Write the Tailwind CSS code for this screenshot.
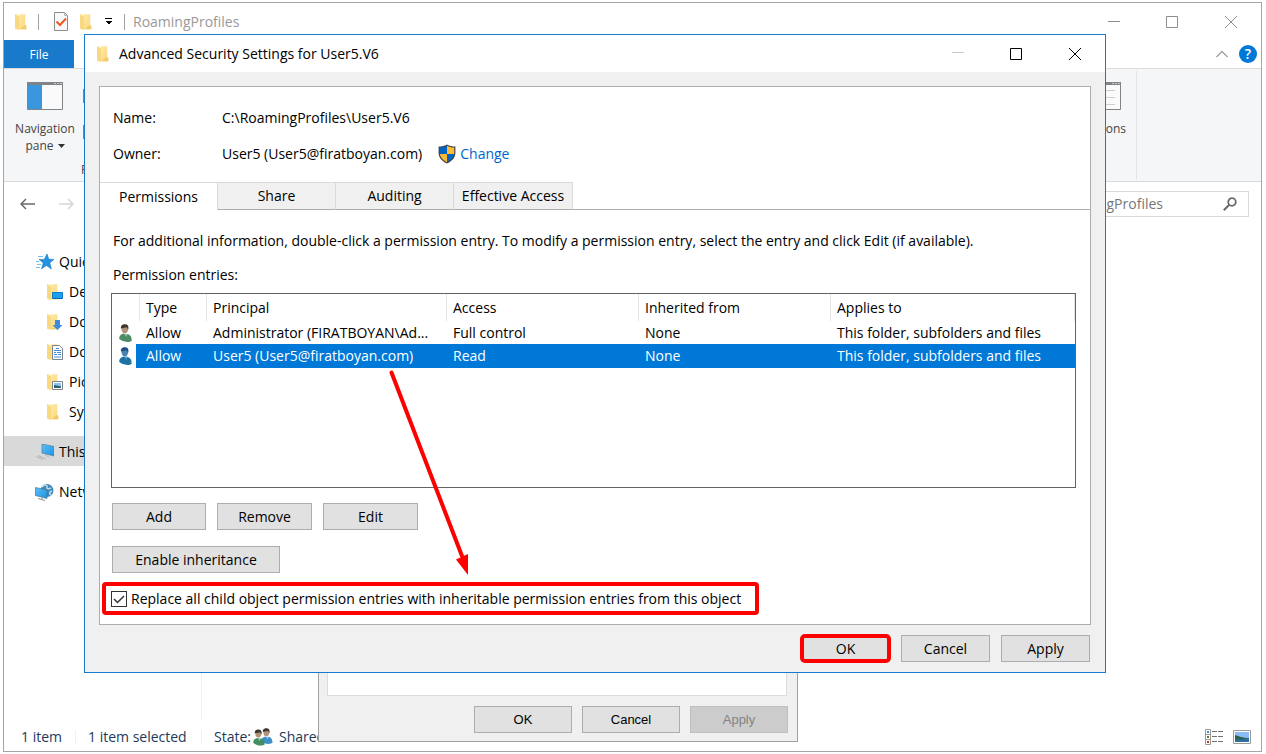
<!DOCTYPE html>
<html lang="en">
<head>
<meta charset="utf-8">
<title>Advanced Security Settings for User5.V6</title>
<script src="https://cdn.jsdelivr.net/npm/@tailwindcss/browser@4"></script>
</head>
<body class="bg-white font-['Open_Sans','Noto_Sans',sans-serif] text-sm leading-5 text-black">

<svg class="absolute size-0" aria-hidden="true">
  <defs>
    <linearGradient id="fold" x1="0" y1="0" x2="1" y2="1"><stop offset="0" stop-color="#ffe9a6"/><stop offset="1" stop-color="#fbd779"/></linearGradient>
    <linearGradient id="screen" x1="0" y1="0" x2="1" y2="1"><stop offset="0" stop-color="#5cc0f8"/><stop offset="1" stop-color="#1b94e6"/></linearGradient>
  </defs>
  <symbol id="folder" viewBox="0 0 16 16">
    <path d="M4.500.200H11.300V11.500h.9V15.200H5z" fill="url(#fold)"/>
    <path d="M10.300 11.500h2v3.700H5.500z" fill="#f2cb69"/>
    <path d="M1 .200H4L4.600 2.500V16L1 14.600z" fill="#ffedb5"/><path d="M1 .200L5 2.400V16L1 14.600z" fill="#f9d980"/>
  </symbol>
  <symbol id="person" viewBox="0 0 16 20">
    <path d="M1.500 16.500c0-3.500 2-5.500 5.500-6l3 .5c3.500.5 5.500 2.500 5.500 7.500-3 2.500-11 1.500-14-2z" fill="currentColor"/>
    <path d="M6 9.500l3.500 5 1.500-4-1.500-2z" fill="#eef3ee" opacity=".5"/>
    <ellipse cx="7.800" cy="5.500" rx="3.600" ry="4.600" fill="#b39378"/>
    <path d="M3.500 5C3 1 6 0 8.500.300 11.500.500 12.500 3 11.500 6.500L10 3.500z" fill="#3d3732"/>
  </symbol>
  <symbol id="personblue" viewBox="0 0 16 20">
    <path d="M1.500 16.500c0-3.500 2-5.500 5.500-6l3 .5c3.500.5 5.500 2.500 5.500 7.500-3 2.500-11 1.500-14-2z" fill="#1b72a8"/>
    <path d="M6 9.500l3.500 5 1.500-4-1.500-2z" fill="#6cb2de" opacity=".6"/>
    <ellipse cx="7.800" cy="5.500" rx="3.600" ry="4.600" fill="#4a82ad"/>
    <path d="M3.500 5C3 1 6 0 8.500.300 11.500.500 12.500 3 11.500 6.500L10 3.500z" fill="#1c4d85"/>
    <circle cx="15" cy="17.300" r=".9" fill="#9ccc2a"/>
  </symbol>
</svg>

<div class="relative h-screen overflow-hidden pt-[2px] pr-1 pb-[2px] pl-[3px]">

  <!-- Explorer window -->
  <main class="flex h-full flex-col border border-[#a5a5a5] bg-white">
    <header class="flex h-[37px] shrink-0 items-center pl-[10px] text-[#999]">
      <svg class="size-4"><use href="#folder"/></svg>
      <span class="ml-2 h-4 w-px bg-[#a0a0a0]"></span>
      <svg class="ml-[14px] h-[19px] w-4" viewBox="0 0 16 19"><path d="M1.500.500h10l3 3v15h-13z" fill="#f7f9fc" stroke="#8c8c8c"/><path d="M11.500.500v3h3" fill="none" stroke="#b5b5b5"/><path d="M3.500 9.500l3.500 3.500 6-6.500" fill="none" stroke="#f2571a" stroke-width="2"/></svg>
      <svg class="ml-[10px] size-4"><use href="#folder"/></svg>
      <svg class="ml-[10px] h-[7px] w-[7px]" viewBox="0 0 7 7" shape-rendering="crispEdges"><path d="M0 0h7v1H0zM0 3h7L3.500 6.500z" fill="#000"/></svg>
      <span class="mr-2 ml-3 h-4 w-px bg-[#a0a0a0]"></span>
      <h1>RoamingProfiles</h1>
      <div class="ml-auto flex">
        <button aria-label="Minimize" class="flex w-[58px] justify-center"><svg class="size-3" viewBox="0 0 12 12"><path d="M0 5.500h12" stroke="#8d8d8d"/></svg></button>
        <button aria-label="Maximize" class="flex w-[58px] justify-center"><svg class="size-3" viewBox="0 0 12 12"><path d="M.5.500h11v11H.5z" fill="none" stroke="#8d8d8d"/></svg></button>
        <button aria-label="Close" class="flex w-[60px] justify-center"><svg class="size-3" viewBox="0 0 12 12"><path d="M0 0l12 12M12 0L0 12" stroke="#8d8d8d"/></svg></button>
      </div>
    </header>

    <div class="flex h-7 shrink-0 items-center">
      <button class="h-full w-[70px] bg-[#1979ca] pt-px text-xs text-white">File</button>
      <button aria-label="Collapse the ribbon" class="ml-auto"><svg class="h-2 w-3" viewBox="0 0 12 8"><path d="M.5 7L6 1.500 11.500 7" fill="none" stroke="#a0a0a0" stroke-width="1.300"/></svg></button>
      <button aria-label="Help" class="mr-1 ml-[11px] flex size-[18px] items-center justify-center rounded-full bg-[#0078d7] text-sm font-semibold text-white">?</button>
    </div>

    <div class="flex h-[114px] shrink-0 justify-between border-y border-[#dadbdc] bg-[#f5f6f7] text-xs leading-[17px] text-[#444]">
      <div class="flex">
        <button class="flex w-[82px] flex-col items-center pt-[13px]">
          <svg class="mb-[10px] h-7 w-9" viewBox="0 0 36 28"><path d="M.5.500h35v27H.5z" fill="#fafafa" stroke="#808488"/><path d="M0 0h36v3H0z" fill="#808488"/><path d="M27 1h2v1h-2zM30 1h2v1h-2zM33 1h2v1h-2z" fill="#c8cacc"/><path d="M1 3h14v24H1z" fill="#3a96dd"/></svg>
          <span>Navigation</span>
          <span class="flex items-center gap-1">pane <svg class="h-1 w-[7px]" viewBox="0 0 7 4"><path d="M0 0h7L3.500 4z" fill="#333"/></svg></span>
        </button>
        <div class="-ml-[3px] flex flex-col gap-[22px] pt-5"><span class="h-[14px] w-3 border border-[#808488] bg-white"></span><span class="h-[14px] w-3 border border-[#808488] bg-white"></span><span class="-ml-[2px]">Panes</span></div>
      </div>
      <div class="my-[2px] mr-[124px] flex w-[60px] flex-col items-end border-r border-[#e2e3e4] pt-[11px] pr-[10px]">
        <svg class="mr-[5px] mb-[10px] h-7 w-9" viewBox="0 0 36 28"><path d="M.5.500h35v27H.5z" fill="#fafafa" stroke="#808488"/><path d="M0 0h36v3H0z" fill="#808488"/><path d="M27 1h2v1h-2zM30 1h2v1h-2zM33 1h2v1h-2z" fill="#c8cacc"/><path d="M8 8.500h22M8 15.500h22M8 22.500h22" stroke="#cfcfcf"/></svg>
        <span>Options</span>
      </div>
    </div>

    <div class="flex h-11 shrink-0 items-center justify-between pr-3 pl-4">
      <div class="flex gap-6">
        <button aria-label="Back"><svg class="h-3 w-[15px]" viewBox="0 0 15 12"><path d="M15 6H1M6 1L1 6l5 5" fill="none" stroke="#6a6a6a" stroke-width="1.500"/></svg></button>
        <button aria-label="Forward"><svg class="h-3 w-[15px]" viewBox="0 0 15 12"><path d="M0 6h14M9 1l5 5-5 5" fill="none" stroke="#d6d6d6" stroke-width="1.500"/></svg></button>
      </div>
      <label class="flex h-[26px] w-[230px] items-center justify-end border border-[#d9d9d9] pr-[11px]">
        <input type="text" aria-label="Search" placeholder="Search RoamingProfiles" class="mr-[60px] w-40 min-w-0 flex-none text-right outline-none placeholder:text-[#767676]">
        <svg class="size-[14px] flex-none" viewBox="0 0 14 14"><circle cx="9" cy="5" r="3.800" fill="none" stroke="#6a6a6a" stroke-width="1.800"/><path d="M6.300 7.700L.8 13.200" stroke="#6a6a6a" stroke-width="2"/></svg>
      </label>
    </div>

    <div class="flex min-h-0 flex-1">
      <nav class="w-[198px] border-r border-[#f0f0f0] pt-5">
        <a href="#" class="flex h-[30px] items-center gap-[5px] pt-[2px] pl-8">
          <svg class="h-4 w-[18px]" viewBox="0 0 18 16"><path d="M11 0l1.800 5.200 5.200.2-4.200 3.300L15.300 15 10.600 11.400 5.500 14.800l1.800-5.900L3 5.400h5.300z" fill="#2293e4" stroke="#1376bd" stroke-width=".6"/><path d="M2 2.500h5M0 7.500h3M1 10.500h4M0 13.500h4" stroke="#67b7ec" stroke-width=".9"/></svg>Quick access</a>
        <a href="#" class="flex h-[30px] items-center gap-[5px] pt-[2px] pl-[42px]">
          <svg class="h-4 w-[18px]" viewBox="0 0 18 16"><use href="#folder" width="16" height="16"/><path d="M6.500 8.500h10v6h-10z" fill="#18a0f4" stroke="#1378be"/><path d="M7 14.500h9" stroke="#0a4f8c" stroke-dasharray="1 1"/></svg>Desktop</a>
        <a href="#" class="flex h-[30px] items-center gap-[5px] pt-[2px] pl-[42px]">
          <svg class="h-4 w-[18px]" viewBox="0 0 18 16"><use href="#folder" width="16" height="16"/><path d="M9 6h5v5h2.500L11.500 16 6.500 11H9z" fill="#3e8ddd"/></svg>Downloads</a>
        <a href="#" class="flex h-[30px] items-center gap-[5px] pt-[2px] pl-[42px]">
          <svg class="h-4 w-[18px]" viewBox="0 0 18 16"><use href="#folder" width="16" height="16"/><path d="M6.500 1.500h7l3 3v11h-10z" fill="#fff" stroke="#7d8388"/><path d="M10 4.500h3M8 6.500h7M8 8.500h2M11 8.500h4M8 10.500h3M12 10.500h3M8 13h7" stroke="#3e8ddd"/></svg>Documents</a>
        <a href="#" class="flex h-[30px] items-center gap-[5px] pt-[2px] pl-[42px]">
          <svg class="h-4 w-[18px]" viewBox="0 0 18 16"><use href="#folder" width="16" height="16"/><path d="M6.500 7.500h10v8h-10z" fill="#fff" stroke="#7d8388"/><path d="M8 9h7v5H8z" fill="#8ec2ee"/><path d="M8 11l3 .5 4 1V14H8z" fill="#2f5f72"/></svg>Pictures</a>
        <a href="#" class="flex h-[30px] items-center gap-[5px] pt-[2px] pl-[42px]">
          <svg class="h-4 w-[18px]" viewBox="0 0 18 16"><use href="#folder" width="16" height="16"/></svg>System32</a>
        <a href="#" class="mt-[10px] flex h-[30px] items-center gap-[5px] bg-[#d9d9d9] pt-[2px] pl-8">
          <svg class="h-4 w-[18px]" viewBox="0 0 18 16"><path d="M6 0l12 2.500V12L6 9z" fill="url(#screen)" stroke="#5c7c95" stroke-width=".7"/><path d="M0 12.500l7 3M2 11.500l8 3.500M9 10.500l4 3" stroke="#aab1b6" stroke-width=".9"/></svg>This PC</a>
        <a href="#" class="mt-[10px] flex h-[30px] items-center gap-[5px] pt-[2px] pl-[31px]">
          <svg class="h-[18px] w-[19px]" viewBox="0 0 19 18"><circle cx="12" cy="7.500" r="6.500" fill="#4288b8"/><path d="M7 4c2-3 6-2 5 0s2 2 4 1M16 12c-2-1-2-3 1-4" fill="none" stroke="#b9ddf0" stroke-width="1.500"/><path d="M.5 4.500L12 7v8.500L.5 12.500z" fill="url(#screen)" stroke="#52718a" stroke-width=".7"/><path d="M3 15.500l7 2M7 14.500V16.500" stroke="#8a9299"/></svg>Network</a>
      </nav>
      <section class="flex-1" aria-label="Files"></section>
    </div>

    <footer class="flex h-[30px] shrink-0 items-center pt-[2px] text-[#1e395b]">
      <span class="w-[72px] border-r border-[#f0f0f0] pl-[17px] leading-[14px]">1 item</span>
      <span class="w-[126px] border-r border-[#f0f0f0] pl-3 leading-[14px]">1 item selected</span>
      <span class="flex items-center pl-3">State:
        <svg class="mr-[6px] ml-[2px] h-[18px] w-5" viewBox="0 0 20 18"><use href="#person" x="7" y="0" width="13" height="16" color="#3f8fcb"/><use href="#person" x="-1" y="1" width="13" height="17" color="#3f8f63"/></svg>Shared</span>
      <svg class="mr-[10px] ml-auto h-4 w-[18px]" viewBox="0 0 18 16"><path d="M.5.500h5v15h-5zM.5 5.500h5M.5 10.500h5" fill="none" stroke="#9a9a9a"/><path d="M7 2.500h5M13 2.500h5M7 7.500h5M13 7.500h5M7 12.500h5M13 12.500h5" stroke="#707070"/><path d="M2 2h2v2H2z" fill="#3f88c8"/><path d="M2 7h2v2H2z" fill="#6b7a2a"/><path d="M2 12h2v2H2z" fill="#c53a22"/></svg>
      <svg class="mr-[10px] h-[14px] w-[18px]" viewBox="0 0 18 14"><path d="M.5.500h17v13H.5z" fill="#fff" stroke="#9a9a9a"/><path d="M2 2h14v10H2z" fill="#8bbcf5"/><path d="M2 8h14v4H2z" fill="#2d6fa3"/><path d="M2 5c4 1 8 3 13 3l-6 1.500H2z" fill="#2d5e4c"/></svg>
    </footer>
  </main>

  <!-- Properties dialog, mostly behind the security dialog -->
  <section aria-label="Properties" class="absolute top-[400px] left-[318px] flex h-[342px] w-[480px] flex-col border border-[#a0a0a0] bg-[#f0f0f0] px-2 pb-2 font-['Liberation_Sans',Arial,sans-serif] text-[13px]">
    <div class="mr-[2px] flex-1 border border-[#dcdcdc] bg-white"></div>
    <div class="mt-[10px] mr-px flex justify-end gap-[10px]">
      <button class="h-[27px] w-[98px] border border-[#adadad] bg-[#e1e1e1]">OK</button>
      <button class="h-[27px] w-[98px] border border-[#adadad] bg-[#e1e1e1]">Cancel</button>
      <button disabled class="h-[27px] w-[98px] border border-[#bfbfbf] bg-[#ccc] text-[#838383]">Apply</button>
    </div>
  </section>

  <!-- Advanced security dialog -->
  <section aria-label="Advanced Security Settings" class="absolute top-[34px] left-[84px] flex h-[639px] w-[1022px] flex-col border border-[#1979ca] bg-[#f0f0f0]">
    <header class="flex h-[37px] shrink-0 items-center bg-white pl-[11px]">
      <svg class="size-4"><use href="#folder"/></svg>
      <h2 class="ml-[7px]">Advanced Security Settings for User5.V6</h2>
      <div class="ml-auto flex">
        <button disabled aria-label="Minimize" class="flex w-[58px] justify-center"><svg class="size-3" viewBox="0 0 12 12"><path d="M0 4.500h12" stroke="#c8c8c8"/></svg></button>
        <button aria-label="Maximize" class="flex w-[58px] justify-center"><svg class="size-3" viewBox="0 0 12 12"><path d="M.5.500h11v11H.5z" fill="none" stroke="#000"/></svg></button>
        <button aria-label="Close" class="flex w-[60px] justify-center"><svg class="size-3" viewBox="0 0 12 12"><path d="M0 0l12 12M12 0L0 12" stroke="#000"/></svg></button>
      </div>
    </header>

    <div class="mx-[14px] mt-[14px] flex flex-1 flex-col border border-[#adadad] bg-white">
      <dl class="grid grid-cols-[109px_1fr] gap-y-4 px-[13px] pt-[21px]">
        <dt>Name:</dt><dd>C:\RoamingProfiles\User5.V6</dd>
        <dt>Owner:</dt>
        <dd class="flex items-center">User5 (User5@firatboyan.com)
          <svg class="mr-1 ml-4 h-5 w-[18px]" viewBox="0 0 18 20"><path d="M9 .500C6.500 2 3.500 2.500.6 2.500V9c0 5 4 8.500 8.400 10.500C13.400 17.500 17.400 14 17.400 9V2.500C14.500 2.500 11.500 2 9 .500z" fill="#454545"/><path d="M9 1.800V10H1.800V3.600C4.500 3.600 7 3 9 1.800z" fill="#0063c6"/><path d="M9 1.800V10h7.200V3.600C13.500 3.600 11 3 9 1.800z" fill="#fdbb38"/><path d="M1.900 10H9v8.200C5 16.300 2.300 13.500 1.900 10z" fill="#fdbb38"/><path d="M16.100 10H9v8.200c4-1.900 6.700-4.700 7.100-8.200z" fill="#0063c6"/></svg><a href="#" class="text-[#0066cc]">Change</a></dd>
      </dl>

      <div role="tablist" class="mt-[18px] flex h-7">
        <button role="tab" aria-selected="true" class="w-[118px] border-t border-r border-[#d9d9d9] bg-white">Permissions</button>
        <button role="tab" class="w-[118px] border-t border-r border-b border-[#d9d9d9] border-b-[#adadad] bg-[#f0f0f0]">Share</button>
        <button role="tab" class="w-[118px] border-t border-r border-b border-[#d9d9d9] border-b-[#adadad] bg-[#f0f0f0]">Auditing</button>
        <button role="tab" class="w-[119px] border-t border-r border-b border-[#d9d9d9] border-b-[#adadad] bg-[#f0f0f0]">Effective Access</button>
        <span class="flex-1 border-b border-[#adadad]"></span>
      </div>

      <div role="tabpanel" class="flex flex-1 flex-col pr-[14px] pl-3">
        <p class="mt-[21px] pl-px">For additional information, double-click a permission entry. To modify a permission entry, select the entry and click Edit (if available).</p>
        <p class="mt-[14px] pl-px">Permission entries:</p>
        <div class="-ml-px mt-2 h-[195px] border border-[#646464]">
          <table class="w-full table-fixed border-separate border-spacing-0 text-left">
            <colgroup><col class="w-[24px]"><col class="w-[71px]"><col class="w-[240px]"><col class="w-[192px]"><col class="w-[192px]"><col></colgroup>
            <thead>
              <tr class="h-[27px] *:border-[#e5e5e5] *:p-0 *:pl-[6px] *:font-normal">
                <th aria-label="Icon"></th><th class="border-r !pl-[3px]"><span class="flex h-[27px] items-center border-l border-[#e5e5e5] pl-[6px]">Type</span></th><th class="border-r">Principal</th><th class="border-r">Access</th><th class="border-r">Inherited from</th><th class="border-r">Applies to</th></tr>
            </thead>
            <tbody>
              <tr class="h-[23px] *:p-0 *:pl-[6px]"><td class="!pl-[5px]"><svg class="h-[18px] w-4 text-[#4b8e63]"><use href="#person"/></svg></td><td class="!pl-[10px]">Allow</td><td>Administrator (FIRATBOYAN\Ad...</td><td>Full control</td><td>None</td><td>This folder, subfolders and files</td></tr>
              <tr class="h-6 text-white *:bg-[#0078d7] *:p-0 *:pl-[6px]"><td class="!bg-white !pl-[5px]"><svg class="h-[18px] w-4"><use href="#personblue"/></svg></td><td class="!pl-[10px]">Allow</td><td>User5 (User5@firatboyan.com)</td><td>Read</td><td>None</td><td>This folder, subfolders and files</td></tr>
            </tbody>
          </table>
        </div>
        <div class="mt-[15px] flex gap-[11px]">
          <button class="h-[27px] w-[94px] border border-[#adadad] bg-[#e1e1e1]">Add</button>
          <button class="h-[27px] w-[95px] border border-[#adadad] bg-[#e1e1e1]">Remove</button>
          <button class="h-[27px] w-[95px] border border-[#adadad] bg-[#e1e1e1]">Edit</button>
        </div>
        <button class="mt-4 h-[27px] w-[168px] border border-[#adadad] bg-[#e1e1e1]">Enable inheritance</button>
        <label class="mt-[9px] -ml-[10px] flex h-[33px] w-[657px] items-center gap-1 rounded-sm border-4 border-[#fe0000] pl-[5px] whitespace-nowrap">
          <span class="relative flex size-4">
            <input type="checkbox" checked class="peer size-4 appearance-none border border-[#333] bg-white">
            <svg class="pointer-events-none absolute inset-0 hidden size-4 peer-checked:block" viewBox="0 0 16 16"><path d="M3 8l3.500 3.500L13 5" fill="none" stroke="#333" stroke-width="1.500"/></svg>
          </span>
          Replace all child object permission entries with inheritable permission entries from this object</label>
      </div>
    </div>

    <footer class="flex shrink-0 justify-end gap-[11px] py-[10px] pr-[15px]">
      <button class="h-[27px] w-[89px] rounded-sm bg-[#e1e1e1] outline-4 -outline-offset-3 outline-[#fe0000]">OK</button>
      <button class="h-[27px] w-[89px] border border-[#adadad] bg-[#e1e1e1]">Cancel</button>
      <button class="h-[27px] w-[89px] border border-[#adadad] bg-[#e1e1e1]">Apply</button>
    </footer>
  </section>

  <!-- Pointer from the selected entry to the check box -->
  <svg class="pointer-events-none absolute top-[368px] left-[386px] h-[210px] w-[90px]" viewBox="0 0 90 210" aria-hidden="true"><path d="M5.500 4.500L76 188" stroke="#fe0000" stroke-width="4" stroke-linecap="round"/><path d="M82 207L70 191.500 82 186z" fill="#fe0000"/></svg>
</div>
</body>
</html>
